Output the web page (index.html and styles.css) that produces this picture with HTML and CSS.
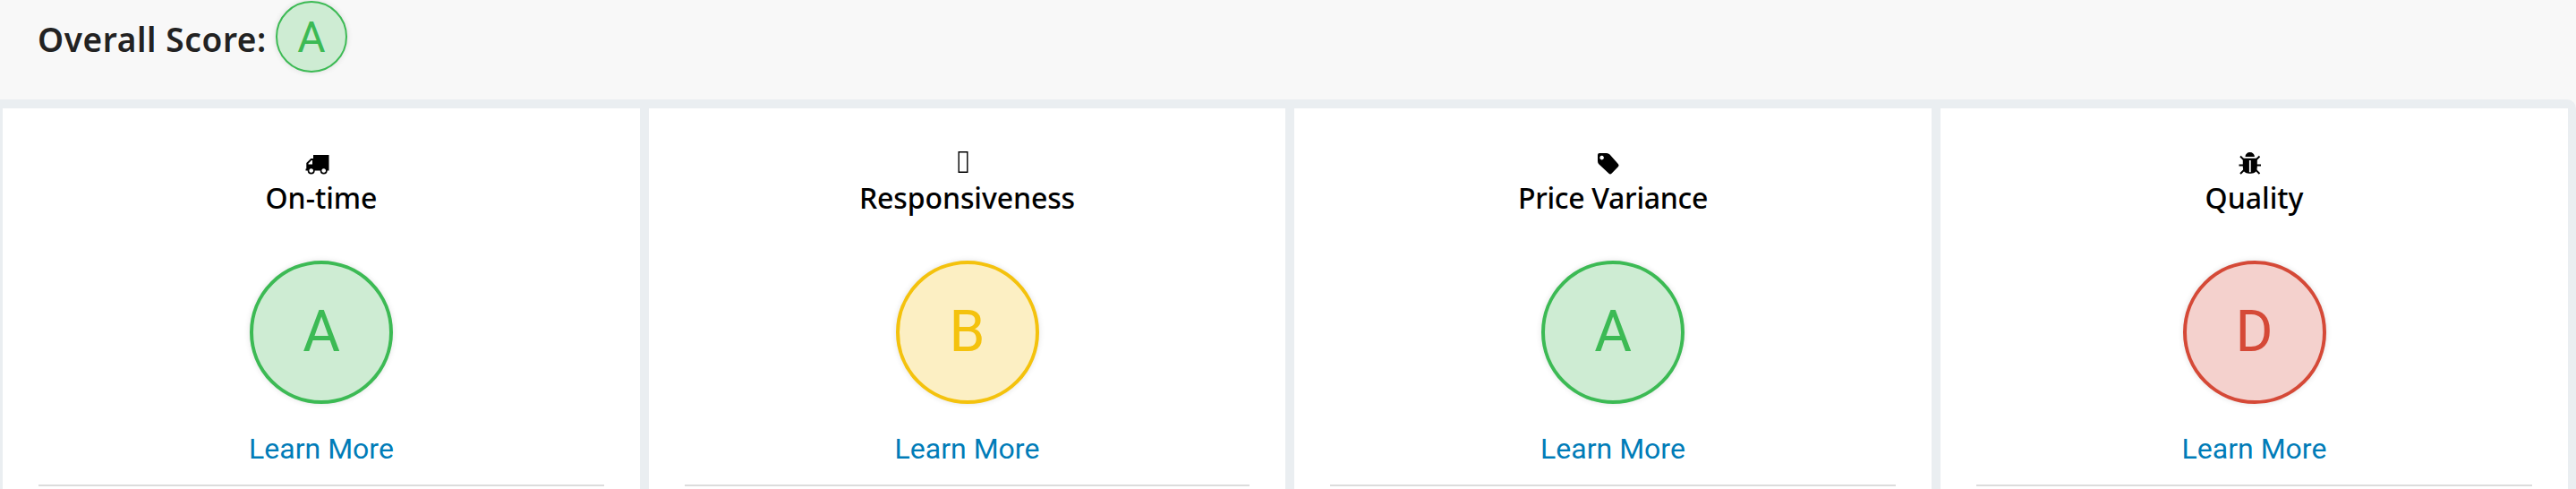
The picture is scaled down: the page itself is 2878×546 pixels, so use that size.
FILE: index.html
```html
<!DOCTYPE html>
<html lang="en">
<head>
<meta charset="utf-8">
<title>Supplier Score</title>
<link rel="stylesheet" href="styles.css">
</head>
<body>
<header class="overall">
  <span class="overall-label">Overall Score:</span>
  <span class="grade grade-small green">A</span>
</header>
<main class="cards">
  <section class="card">
    <svg class="icon" viewBox="0 0 30 26"><path fill-rule="evenodd" d="M10 2h17.500v17.500h-1.800a4 4 0 0 1-8 0h-6a4 4 0 0 1-8 0H1.500v-2h.8v-6.500l5-5H10zM9 8H8l-3.500 3.500v1H9zM7.700 17.200a2.300 2.300 0 1 0 .01 0zM21.700 17.200a2.300 2.300 0 1 0 .01 0z"/></svg>
    <h2 class="title">On-time</h2>
    <div class="grade green">A</div>
    <a class="more">Learn More</a>
    <hr class="rule">
  </section>
  <section class="card">
    <svg class="icon" viewBox="0 0 30 26"><path fill="none" stroke="#000" stroke-width="1.400" d="M9.200-1.300h9.600v22.600h-9.600z"/></svg>
    <h2 class="title title-snug">Responsiveness</h2>
    <div class="grade yellow">B</div>
    <a class="more">Learn More</a>
    <hr class="rule">
  </section>
  <section class="card">
    <svg class="icon" viewBox="0 0 30 26"><path fill-rule="evenodd" d="M2 2Q2 0 4 0h8q2 0 3.500 1.500l9.500 10.700q1.200 1.400 0 2.800L17.500 22.800q-1.500 1.400-3 0L3.500 12.500Q2 11 2 9zM6.600 2.800a2.300 2.300 0 1 0 .01 0z"/></svg>
    <h2 class="title title-tight">Price Variance</h2>
    <div class="grade green">A</div>
    <a class="more">Learn More</a>
    <hr class="rule">
  </section>
  <section class="card">
    <svg class="icon" viewBox="0 0 30 26"><path fill-rule="evenodd" d="M8.500 4a5.200 5 0 0 1 10.400 0zM5.800 5.800h16v9.700q0 7.300-7 7.300h-2q-7 0-7-7.300zM12.900 8v13.200h1.800V8z"/><path fill="none" stroke="#000" stroke-width="1.900" d="M7 7.500L3 3.500M20.500 7.500l4-4M7 13.500H1.500M20.500 13.500H26M8 18l-5 5M19.500 18l5 5"/></svg>
    <h2 class="title">Quality</h2>
    <div class="grade red">D</div>
    <a class="more">Learn More</a>
    <hr class="rule">
  </section>
</main>
</body>
</html>
```
FILE: styles.css
```css
* { box-sizing: border-box; }
body { margin: 0; height: 546px; overflow: hidden; background: #f8f8f8; font-family: Roboto, sans-serif; }
.overall { height: 111px; padding: 1px 0 0 42px; display: flex; align-items: flex-start; }
.overall-label { width: 266px; padding-top: 16px; font: 600 37px/54px "Noto Sans", sans-serif; letter-spacing: .6px; color: #222; white-space: nowrap; }
.cards { height: 435px; padding: 10px 9px 0 3px; display: grid; grid-template-columns: 712px 711px 712px 701px; gap: 10px; background: #eaeef1; border-top-right-radius: 10px; }
.card { background: #fff; padding: 50px 40px 0; display: flex; flex-direction: column; align-items: center; }
.icon { width: 30px; height: 26px; margin-right: 8px; overflow: visible; }
.title { margin: 0; padding-top: 2px; height: 94px; font: 500 32px/44px "Noto Sans", sans-serif; color: #000; white-space: nowrap; }
.title-snug { letter-spacing: -.1px; }
.title-tight { letter-spacing: -.28px; }
.grade { width: 160px; height: 160px; flex: none; border: 4px solid; border-radius: 50%; font-size: 64px; line-height: 152px; text-align: center; box-shadow: 0 0 6px rgba(0, 0, 0, .12); }
.grade-small { width: 80px; height: 80px; border-width: 2px; font-size: 48px; line-height: 78px; }
.green { color: #3cba54; background: #ceecd3; }
.yellow { color: #f4c20d; background: #fcefc3; }
.red { color: #d54937; background: #f4d1cd; }
.more { margin-top: 30px; font-size: 32px; line-height: 40px; color: #007cb8; }
.rule { width: 100%; height: 2px; margin: 20px 0 0; border: 0; background: #dcdcdc; }
```
